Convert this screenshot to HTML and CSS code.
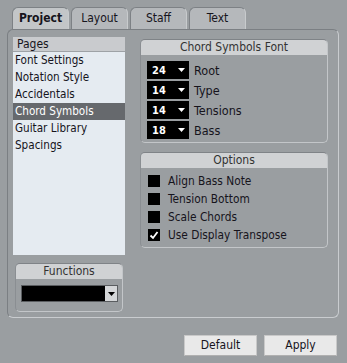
FILE: index.html
```html
<!DOCTYPE html>
<html>
<head>
<meta charset="utf-8">
<link rel="stylesheet" href="styles.css">
</head>
<body>
<div class="tabs">
  <div class="tab active">Project</div>
  <div class="tab">Layout</div>
  <div class="tab">Staff</div>
  <div class="tab">Text</div>
</div>
<div class="panel">
  <div class="leftcol">
    <div class="list">
      <div class="list-head">Pages</div>
      <div class="item">Font Settings</div>
      <div class="item">Notation Style</div>
      <div class="item">Accidentals</div>
      <div class="item selected">Chord Symbols</div>
      <div class="item">Guitar Library</div>
      <div class="item">Spacings</div>
    </div>
    <div class="group functions">
      <div class="group-head">Functions</div>
      <div class="func-body">
        <div class="combo"><span class="combo-btn"><svg width="7" height="4" viewBox="0 0 7 4"><path d="M0 0h7L3.5 4z" fill="#000"/></svg></span></div>
      </div>
    </div>
  </div>
  <div class="rightcol">
    <div class="group font">
      <div class="group-head">Chord Symbols Font</div>
      <div class="rows">
        <div class="frow"><div class="drop"><b>24</b><svg width="7" height="4" viewBox="0 0 7 4"><path d="M0 0h7L3.5 4z" fill="#fff"/></svg></div><span>Root</span></div>
        <div class="frow"><div class="drop"><b>14</b><svg width="7" height="4" viewBox="0 0 7 4"><path d="M0 0h7L3.5 4z" fill="#fff"/></svg></div><span>Type</span></div>
        <div class="frow"><div class="drop"><b>14</b><svg width="7" height="4" viewBox="0 0 7 4"><path d="M0 0h7L3.5 4z" fill="#fff"/></svg></div><span>Tensions</span></div>
        <div class="frow"><div class="drop"><b>18</b><svg width="7" height="4" viewBox="0 0 7 4"><path d="M0 0h7L3.5 4z" fill="#fff"/></svg></div><span>Bass</span></div>
      </div>
    </div>
    <div class="group options">
      <div class="group-head">Options</div>
      <div class="rows opts">
        <div class="orow"><span class="cb"></span>Align Bass Note</div>
        <div class="orow"><span class="cb"></span>Tension Bottom</div>
        <div class="orow"><span class="cb"></span>Scale Chords</div>
        <div class="orow"><span class="cb"><svg width="12" height="12" viewBox="0 0 12 12"><path d="M2.5 6.5l2.5 2.5 4.5-6" stroke="#fff" stroke-width="1.8" fill="none"/></svg></span>Use Display Transpose</div>
      </div>
    </div>
  </div>
</div>
<div class="buttons">
  <div class="btn">Default</div>
  <div class="btn">Apply</div>
</div>
</body>
</html>
```
FILE: styles.css
```css
html, body {
  margin: 0;
  padding: 0;
  background: #9a9ea1;
  font-family: "DejaVu Sans Condensed", "Liberation Sans", Arial, sans-serif;
  font-stretch: condensed;
  font-size: 12px;
  color: #16141c;
  width: 347px;
  height: 363px;
  overflow: hidden;
}
.tabs {
  display: flex;
  align-items: flex-start;
  gap: 2px;
  padding: 7px 0 0 12px;
  height: 29px;
  box-sizing: border-box;
  position: relative;
  z-index: 2;
}
.tab {
  width: 57px;
  height: 22px;
  box-sizing: border-box;
  background: #b5b8bb;
  border: 1px solid #7d8185;
  border-bottom: none;
  border-right-color: #c8cbcd;
  border-radius: 6px 6px 0 0;
  text-align: center;
  line-height: 21px;
  font-size: 12px;
}
.tab.active {
  background: #c3c6c8;
  font-weight: bold;
}
.panel {
  margin: 0 0 0 7px;
  width: 332px;
  height: 289px;
  box-sizing: border-box;
  border: 1px solid #c9cccf;
  border-top-color: #7b7f83;
  border-left-color: #7b7f83;
  border-radius: 6px;
  display: flex;
  gap: 15px;
  padding: 7px 0 0 5px;
}
.leftcol {
  width: 112px;
  display: flex;
  flex-direction: column;
  align-items: center;
}
.list {
  width: 112px;
  height: 218px;
  background: #e5ebf1;
  box-sizing: border-box;
}
.list-head {
  height: 14px;
  line-height: 14px;
  background: #c9cbce;
  padding-left: 4px;
  border-bottom: 1px solid #9ea2a6;
}
.item {
  height: 17px;
  line-height: 17px;
  padding-left: 2px;
  font-size: 11.6px;
}
.item.selected {
  background: #66696d;
  color: #fff;
}
.group {
  box-sizing: border-box;
  border: 1px solid #c3c6c9;
  border-top-color: #7f8387;
  border-left-color: #8a8e92;
  border-radius: 5px;
}
.group-head {
  background: #d0d2d4;
  text-align: center;
  height: 15px;
  line-height: 15px;
  color: #333;
  border-radius: 4px 4px 0 0;
}
.functions {
  width: 108px;
  height: 49px;
  margin-top: 8px;
}
.func-body {
  padding: 6px 4px 0 5px;
}
.combo {
  height: 17px;
  background: #000;
  border: 1px solid #5a5d60;
  box-sizing: border-box;
  display: flex;
  justify-content: flex-end;
}
.combo-btn {
  width: 12px;
  background: #d4d6d8;
  display: flex;
  align-items: center;
  justify-content: center;
}
.rightcol {
  width: 188px;
  padding-top: 2px;
  display: flex;
  flex-direction: column;
}
.font {
  height: 104px;
}
.rows {
  padding: 6px 0 0 6px;
  display: flex;
  flex-direction: column;
  gap: 2px;
}
.frow {
  display: flex;
  align-items: center;
  gap: 5px;
  height: 18px;
  font-size: 12.5px;
}
.drop {
  width: 42px;
  height: 18px;
  background: #000;
  color: #fff;
  display: flex;
  align-items: center;
  justify-content: space-between;
  padding: 0 4px 0 5px;
  box-sizing: border-box;
  font-size: 11px;
}
.options {
  height: 96px;
  margin-top: 9px;
}
.opts {
  padding: 7px 0 0 7px;
  gap: 6px;
}
.orow {
  display: flex;
  align-items: center;
  gap: 8px;
  height: 12px;
  font-size: 11.8px;
}
.cb {
  width: 12px;
  height: 12px;
  background: #000;
  display: block;
}
.cb svg { display: block; }
.buttons {
  display: flex;
  justify-content: flex-end;
  gap: 7px;
  padding: 17px 10px 0 0;
}
.btn {
  width: 73px;
  height: 21px;
  box-sizing: border-box;
  background: #e9e9e9;
  border: 1px solid #c9c9c9;
  border-bottom-color: #b0b0b0;
  text-align: center;
  line-height: 19px;
  font-size: 12px;
}
```
